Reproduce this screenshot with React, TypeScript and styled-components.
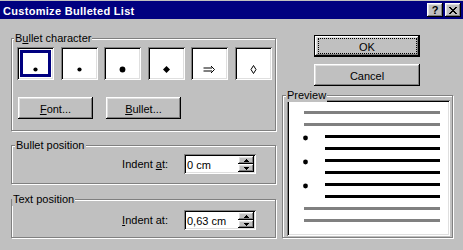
import React from "react";
import styled, { createGlobalStyle, css } from "styled-components";

const GlobalStyle = createGlobalStyle`
  html, body {
    margin: 0;
    padding: 0;
    background: #c0c0c0;
  }
  body {
    font-family: "Liberation Sans", Arial, sans-serif;
    font-size: 11px;
    color: #000;
  }
`;

const raised = css`
  box-shadow: inset -1px -1px 0 #000, inset 1px 1px 0 #fff,
    inset -2px -2px 0 #808080, inset 2px 2px 0 #dfdfdf;
`;

const sunken = css`
  box-shadow: inset 1px 1px 0 #808080, inset -1px -1px 0 #fff,
    inset 2px 2px 0 #000, inset -2px -2px 0 #dfdfdf;
`;

const Window = styled.div`
  width: 463px;
  height: 250px;
  box-sizing: border-box;
  padding-top: 1px;
  display: flex;
  flex-direction: column;
  background: #c0c0c0;
  overflow: hidden;
`;

const TitleBar = styled.div`
  height: 18px;
  background: #000080;
  display: flex;
  align-items: center;
  padding: 0 2px 0 3px;
  color: #fff;
`;

const Title = styled.span`
  flex: 1;
  font-weight: bold;
  letter-spacing: 0.3px;
  line-height: 16px;
  padding-top: 2px;
`;

const CaptionButtons = styled.div`
  display: flex;
  gap: 2px;
`;

const CaptionButton = styled.div`
  width: 16px;
  height: 14px;
  box-sizing: border-box;
  background: #c0c0c0;
  ${raised};
  display: flex;
  align-items: center;
  justify-content: center;
  color: #000;
  font-weight: bold;
  font-size: 11px;
  line-height: 11px;
`;

const Body = styled.div`
  display: flex;
  gap: 6px;
  padding-left: 11px;
`;

const LeftColumn = styled.div`
  width: 265px;
  padding-top: 19px;
  display: flex;
  flex-direction: column;
`;

const RightColumn = styled.div`
  width: 171px;
  padding-top: 16px;
  display: flex;
  flex-direction: column;
`;

const GroupBox = styled.div<{ $mt?: number; $pad: string; $h: number }>`
  position: relative;
  box-sizing: border-box;
  height: ${(p) => p.$h}px;
  margin-top: ${(p) => p.$mt ?? 0}px;
  padding: ${(p) => p.$pad};
  border: 1px solid #808080;
  box-shadow: inset 1px 1px 0 #fff, 1px 1px 0 #fff;
`;

const Legend = styled.span<{ $left: number }>`
  position: absolute;
  top: -7px;
  left: ${(p) => p.$left}px;
  padding: 0 1px;
  line-height: 13px;
  background: #c0c0c0;
  white-space: nowrap;
`;

const U = styled.span`
  text-decoration: underline;
`;

const BulletGrid = styled.div`
  display: grid;
  grid-template-columns: repeat(6, 37px);
  justify-content: space-between;
  height: 33px;
`;

const BulletBox = styled.div<{ $selected?: boolean }>`
  position: relative;
  box-sizing: border-box;
  background: #fff;
  ${sunken};
  display: flex;
  justify-content: center;
  align-items: flex-start;
  padding-top: 18px;

  ${(p) =>
    p.$selected &&
    css`
      &::after {
        content: "";
        position: absolute;
        inset: 3px;
        border: 3px solid #000080;
      }
    `}
`;

const ButtonRow = styled.div`
  display: flex;
  gap: 13px;
  margin: 17px 0 0 1px;
`;

const Button = styled.div<{ $w: number; $default?: boolean; $mt?: number }>`
  position: relative;
  width: ${(p) => p.$w}px;
  height: 22px;
  box-sizing: border-box;
  margin-top: ${(p) => p.$mt ?? 0}px;
  background: #c0c0c0;
  display: flex;
  align-items: center;
  justify-content: center;
  padding-top: 1px;
  ${(p) =>
    p.$default
      ? css`
          border: 1px solid #000;
          box-shadow: inset -1px -1px 0 #000, inset 1px 1px 0 #fff,
            inset -2px -2px 0 #808080, inset 2px 2px 0 #dfdfdf;
          &::after {
            content: "";
            position: absolute;
            top: 2px;
            left: 3px;
            right: 2px;
            bottom: 2px;
            border: 1px dotted #000;
          }
        `
      : raised};
`;

const ButtonStack = styled.div`
  display: flex;
  flex-direction: column;
  margin-left: 32px;
`;

const IndentRow = styled.div`
  display: flex;
  justify-content: flex-end;
  align-items: center;
  gap: 16px;
`;

const TextBox = styled.div`
  width: 72px;
  height: 20px;
  box-sizing: border-box;
  padding: 2px;
  background: #fff;
  ${sunken};
  display: flex;
  align-items: center;
`;

const TextValue = styled.span`
  flex: 1;
  padding: 1px 0 0 1px;
`;

const Spinner = styled.div`
  width: 16px;
  height: 16px;
  display: flex;
  flex-direction: column;
`;

const SpinButton = styled.div`
  height: 8px;
  box-sizing: border-box;
  background: #c0c0c0;
  ${raised};
  display: flex;
  align-items: center;
  justify-content: center;
`;

const PreviewPanel = styled.div`
  width: 163px;
  height: 136px;
  box-sizing: border-box;
  padding: 2px;
  background: #fff;
  ${sunken};

  svg {
    display: block;
  }
`;

const Glyph = ({ kind }: { kind: number }) => {
  switch (kind) {
    case 0:
    case 1:
      return (
        <svg width="13" height="9" viewBox="0 0 13 9">
          <circle cx="6.5" cy="4.5" r="2.1" fill="#000" />
        </svg>
      );
    case 2:
      return (
        <svg width="13" height="9" viewBox="0 0 13 9">
          <circle cx="6.5" cy="4.5" r="2.9" fill="#000" />
        </svg>
      );
    case 3:
      return (
        <svg width="13" height="9" viewBox="0 0 13 9">
          <polygon points="6.5,1 10,4.5 6.5,8 3,4.5" fill="#000" />
        </svg>
      );
    case 4:
      return (
        <svg width="13" height="9" viewBox="0 0 13 9">
          <path
            d="M0.5 3H9M0.5 6H9M8 1L11.5 4.5L8 8"
            stroke="#000"
            strokeWidth="1"
            fill="none"
          />
        </svg>
      );
    default:
      return (
        <svg width="13" height="9" viewBox="0 0 13 9">
          <polygon
            points="6.5,0.5 9,4.5 6.5,8.5 4,4.5"
            stroke="#000"
            strokeWidth="1"
            fill="none"
          />
        </svg>
      );
  }
};

const Arrow = ({ up }: { up?: boolean }) => (
  <svg width="5" height="3" viewBox="0 0 5 3" shapeRendering="crispEdges">
    {up ? (
      <path d="M2 0h1v1h1v1h1v1H0V2h1V1h1z" fill="#000" />
    ) : (
      <path d="M0 0h5v1H4v1H3v1H2V2H1V1H0z" fill="#000" />
    )}
  </svg>
);

const SpinBox = ({ value }: { value: string }) => (
  <TextBox>
    <TextValue>{value}</TextValue>
    <Spinner>
      <SpinButton>
        <Arrow up />
      </SpinButton>
      <SpinButton>
        <Arrow />
      </SpinButton>
    </Spinner>
  </TextBox>
);

const Preview = () => {
  const rows = [0, 1, 2, 3, 4, 5, 6, 7, 8, 9];
  return (
    <svg width="159" height="132" viewBox="0 0 159 132" shapeRendering="crispEdges">
      {rows.map((i) => {
        const y = 9 + i * 12;
        const body = i >= 2 && i <= 7;
        return (
          <rect
            key={i}
            x={body ? 36 : 15}
            y={y}
            width={body ? 115 : 136}
            height="3"
            fill={body ? "#000" : "#808080"}
          />
        );
      })}
      {[0, 1, 2].map((i) => (
        <circle
          key={i}
          cx="16.5"
          cy={36 + i * 24}
          r="2.4"
          fill="#000"
          shapeRendering="auto"
        />
      ))}
    </svg>
  );
};

export default function App() {
  return (
    <>
      <GlobalStyle />
      <Window>
        <TitleBar>
          <Title>Customize Bulleted List</Title>
          <CaptionButtons>
            <CaptionButton>?</CaptionButton>
            <CaptionButton>
              <svg width="8" height="7" viewBox="0 0 8 7" shapeRendering="crispEdges">
                <path
                  d="M0 0h2v1h1v1h2V1h1V0h2v1H7v1H6v1H5v1h1v1h1v1h1v1H6V6H5V5H3v1H2v1H0V6h1V5h1V4h1V3H2V2H1V1H0z"
                  fill="#000"
                />
              </svg>
            </CaptionButton>
          </CaptionButtons>
        </TitleBar>
        <Body>
          <LeftColumn>
            <GroupBox $h={93} $pad="8px 3px 11px 5px">
              <Legend $left={2}>
                B<U>u</U>llet character
              </Legend>
              <BulletGrid>
                {[0, 1, 2, 3, 4, 5].map((k) => (
                  <BulletBox key={k} $selected={k === 0}>
                    <Glyph kind={k} />
                  </BulletBox>
                ))}
              </BulletGrid>
              <ButtonRow>
                <Button $w={75}>
                  <span>
                    <U>F</U>ont...
                  </span>
                </Button>
                <Button $w={75}>
                  <span>
                    <U>B</U>ullet...
                  </span>
                </Button>
              </ButtonRow>
            </GroupBox>
            <GroupBox $h={39} $mt={14} $pad="8px 19px 9px 0">
              <Legend $left={3}>Bullet position</Legend>
              <IndentRow>
                <span>
                  Indent <U>a</U>t:
                </span>
                <SpinBox value="0 cm" />
              </IndentRow>
            </GroupBox>
            <GroupBox $h={39} $mt={15} $pad="10px 19px 7px 0">
              <Legend $left={0}>Text position</Legend>
              <IndentRow>
                <span>
                  <U>I</U>ndent at:
                </span>
                <SpinBox value="0,63 cm" />
              </IndentRow>
            </GroupBox>
          </LeftColumn>
          <RightColumn>
            <ButtonStack>
              <Button $w={106} $default>
                OK
              </Button>
              <Button $w={106} $mt={7}>
                Cancel
              </Button>
            </ButtonStack>
            <GroupBox $h={143} $mt={9} $pad="4px 2px 1px 4px">
              <Legend $left={3}>Preview</Legend>
              <PreviewPanel>
                <Preview />
              </PreviewPanel>
            </GroupBox>
          </RightColumn>
        </Body>
      </Window>
    </>
  );
}
